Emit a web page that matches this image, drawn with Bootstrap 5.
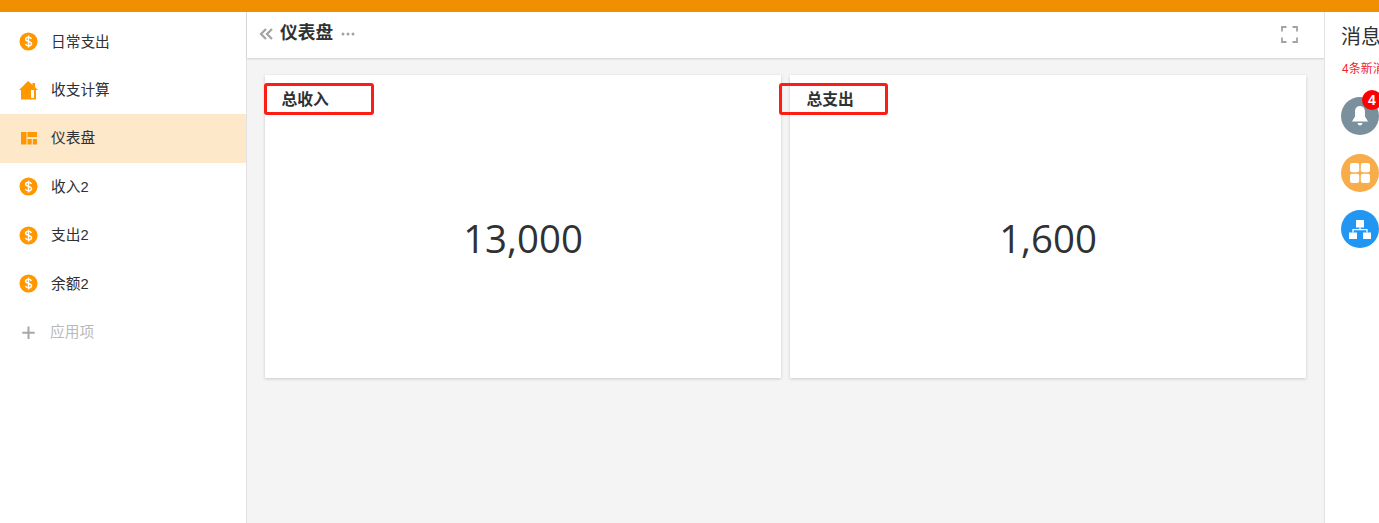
<!DOCTYPE html>
<html lang="zh-CN">
<head>
  <meta charset="UTF-8" />
  <meta name="viewport" content="width=device-width, initial-scale=1.0" />
  <title>仪表盘</title>
  <link href="https://cdn.jsdelivr.net/npm/bootstrap@5.3.3/dist/css/bootstrap.min.css" rel="stylesheet" />
  <style>
    html, body {
      height: 100%;
      overflow: hidden;
    }
    body {
      font-family: "Liberation Sans", "Noto Sans CJK SC", sans-serif;
      color: #303133;
      background-color: #f4f4f4;
    }
    .top-strip {
      height: 12px;
      background-color: #f09000;
      box-shadow: 0 1px 2px rgba(0, 0, 0, 0.15);
    }
    .app-body {
      height: 511px;
    }
    .side-menu {
      flex: 0 0 247px;
      padding-top: 5.5px;
      background-color: #fff;
      border-right: 1px solid #e2e2e2;
    }
    .menu-item {
      height: 48.4px;
      padding-left: 19px;
      gap: 13px;
      font-size: 14.7px;
      color: #303133;
    }
    .menu-item.is-active {
      background-color: #fde8ca;
    }
    .menu-item.is-muted {
      gap: 12px;
      color: #b9b9b9;
    }
    .menu-item svg {
      flex: none;
    }
    .main-area {
      flex: 0 0 1077px;
    }
    .page-bar {
      height: 46px;
      padding: 0 26px 2px 12px;
      background-color: #fff;
      box-shadow: 0 1px 2px rgba(0, 0, 0, 0.15);
    }
    .page-title {
      margin: 0 0 0 6px;
      font-size: 17.7px;
      font-weight: 700;
      color: #303133;
    }
    .stat-row {
      gap: 9px;
      padding: 17px 0 0 18px;
    }
    .stat-card {
      position: relative;
      width: 516px;
      height: 303px;
      background-color: #fff;
      box-shadow: 0 1px 3px rgba(0, 0, 0, 0.18);
    }
    .stat-label {
      padding: 14px 0 0 16.5px;
      font-size: 15.8px;
      font-weight: 700;
      line-height: 22px;
    }
    .stat-num {
      font-family: "Open Sans", sans-serif;
      font-size: 38.4px;
      line-height: 52px;
      margin-top: 101px;
      color: #303133;
    }
    .mark-box {
      position: absolute;
      top: 8px;
      left: -1px;
      width: 110px;
      height: 32px;
      border: 3px solid #fa1e14;
      border-radius: 3px;
    }
    .mark-box.is-second {
      left: -11px;
      width: 109px;
    }
    .info-panel {
      flex: 0 0 260px;
      padding: 11px 0 0 16px;
      background-color: #fff;
      border-left: 1px solid #e2e2e2;
    }
    .info-title {
      font-size: 20px;
      line-height: 28px;
      white-space: nowrap;
    }
    .info-sub {
      margin-top: 10px;
      padding-left: 1px;
      font-size: 12px;
      line-height: 16px;
      color: #f5222d;
      white-space: nowrap;
    }
    .round-icon {
      position: relative;
      width: 38px;
      height: 38px;
      margin-bottom: 18.5px;
      border-radius: 50%;
    }
    .round-icon.first {
      margin-top: 20px;
    }
    .icon-slate { background-color: #7a909d; }
    .icon-amber { background-color: #f8ac4a; }
    .icon-blue { background-color: #2196f3; }
    .count-dot {
      position: absolute;
      top: -7px;
      left: 21px;
      width: 20px;
      height: 20px;
      border-radius: 50%;
      background-color: #f00;
      color: #fff;
      font-size: 14px;
      font-weight: 700;
      line-height: 20px;
      text-align: center;
    }
  </style>
</head>
<body>
  <svg width="0" height="0" class="position-absolute">
    <symbol id="coin" viewBox="0 0 20 20">
      <circle cx="10" cy="10" r="9.5" fill="#ff9800" />
      <path d="M13 7.3C12.6 6 11.4 5.5 10 5.5 8.3 5.5 7 6.3 7 7.7 7 10.6 13.2 9.2 13.2 12.3 13.2 13.7 11.8 14.5 10 14.5 8.4 14.5 7.2 13.8 6.8 12.5M10 3.8V16.2" fill="none" stroke="#fff" stroke-width="1.5" />
    </symbol>
  </svg>

  <div class="top-strip"></div>
  <div class="app-body d-flex">
    <nav class="side-menu">
      <div class="menu-item d-flex align-items-center">
        <svg width="19" height="19"><use href="#coin" /></svg><span>日常支出</span>
      </div>
      <div class="menu-item d-flex align-items-center">
        <svg width="19" height="19" viewBox="0 0 19 19"><path fill="#ff9800" d="M9 0 13.5 3.8V2H16V6L19 9H17V18.5H2V9H0Z" /><rect x="12" y="9" width="3" height="8" fill="#fff" /></svg><span>收支计算</span>
      </div>
      <div class="menu-item is-active d-flex align-items-center">
        <svg width="19" height="19" viewBox="0 0 19 19"><path fill="#ff9800" d="M2 3h5.5v12.5H2ZM8.5 3H18v5H8.5ZM8.5 10H12.7V15.5H8.5ZM13.800 10H18V15.5H13.800Z" /></svg><span>仪表盘</span>
      </div>
      <div class="menu-item d-flex align-items-center">
        <svg width="19" height="19"><use href="#coin" /></svg><span>收入2</span>
      </div>
      <div class="menu-item d-flex align-items-center">
        <svg width="19" height="19"><use href="#coin" /></svg><span>支出2</span>
      </div>
      <div class="menu-item d-flex align-items-center">
        <svg width="19" height="19"><use href="#coin" /></svg><span>余额2</span>
      </div>
      <div class="menu-item is-muted d-flex align-items-center">
        <svg width="19" height="19" viewBox="0 0 19 19"><path d="M9.5 3.5V16M3.3 9.7H15.7" stroke="#a8a8a8" stroke-width="2" fill="none" /></svg><span>应用项</span>
      </div>
    </nav>

    <main class="main-area">
      <div class="page-bar d-flex align-items-center">
        <svg width="15" height="14" viewBox="0 0 15 14"><path d="M7 2 2 7l5 5M13 2 8 7l5 5" fill="none" stroke="#a3a3a3" stroke-width="2.2" /></svg>
        <h1 class="page-title">仪表盘</h1>
        <svg class="ms-2" width="14" height="4" viewBox="0 0 14 4"><circle cx="2" cy="2" r="1.5" fill="#a3a3a3" /><circle cx="7" cy="2" r="1.5" fill="#a3a3a3" /><circle cx="12" cy="2" r="1.5" fill="#a3a3a3" /></svg>
        <svg class="ms-auto" width="17" height="17" viewBox="0 0 17 17"><path d="M1 5.5V1H5.5M11.5 1H16V5.5M16 11.5V16H11.5M5.5 16H1V11.5" fill="none" stroke="#a3a3a3" stroke-width="1.8" /></svg>
      </div>
      <div class="stat-row d-flex">
        <section class="stat-card text-center">
          <div class="stat-label text-start">总收入</div>
          <div class="stat-num">13,000</div>
          <div class="mark-box"></div>
        </section>
        <section class="stat-card text-center">
          <div class="stat-label text-start">总支出</div>
          <div class="stat-num">1,600</div>
          <div class="mark-box is-second"></div>
        </section>
      </div>
    </main>

    <aside class="info-panel">
      <div class="info-title">消息中心</div>
      <div class="info-sub">4条新消息</div>
      <div class="round-icon first icon-slate d-flex align-items-center justify-content-center">
        <svg width="18" height="20" viewBox="0 0 18 20"><path fill="#fff" d="M9 0C5.5 0 4 2.8 4 6V10.5L1 15.5H17L14 10.5V6C14 2.8 12.5 0 9 0ZM6.5 17H11.5C11.3 18.4 10.3 19.5 9 19.5S6.7 18.4 6.5 17Z" /></svg>
        <span class="count-dot">4</span>
      </div>
      <div class="round-icon icon-amber d-flex align-items-center justify-content-center">
        <svg width="20" height="20" viewBox="0 0 20 20"><rect x="0" y="0" width="9.2" height="9.2" rx="2" fill="#fff" /><rect x="10.8" y="0" width="9.2" height="9.2" rx="2" fill="#fff" /><rect x="0" y="10.8" width="9.2" height="9.2" rx="2" fill="#fff" /><rect x="10.8" y="10.8" width="9.2" height="9.2" rx="2" fill="#fff" /></svg>
      </div>
      <div class="round-icon icon-blue d-flex align-items-center justify-content-center">
        <svg width="22" height="19" viewBox="0 0 22 19"><path fill="#fff" d="M7 0h8v7.5H7ZM0 12.5h8V19H0ZM14 12.5h8V19H14Z" /><path d="M11 7.5V10M4 12.5V9.7H18V12.5" fill="none" stroke="#fff" stroke-width="1.3" /></svg>
      </div>
    </aside>
  </div>

  <script src="https://cdn.jsdelivr.net/npm/bootstrap@5.3.3/dist/js/bootstrap.bundle.min.js"></script>
</body>
</html>
